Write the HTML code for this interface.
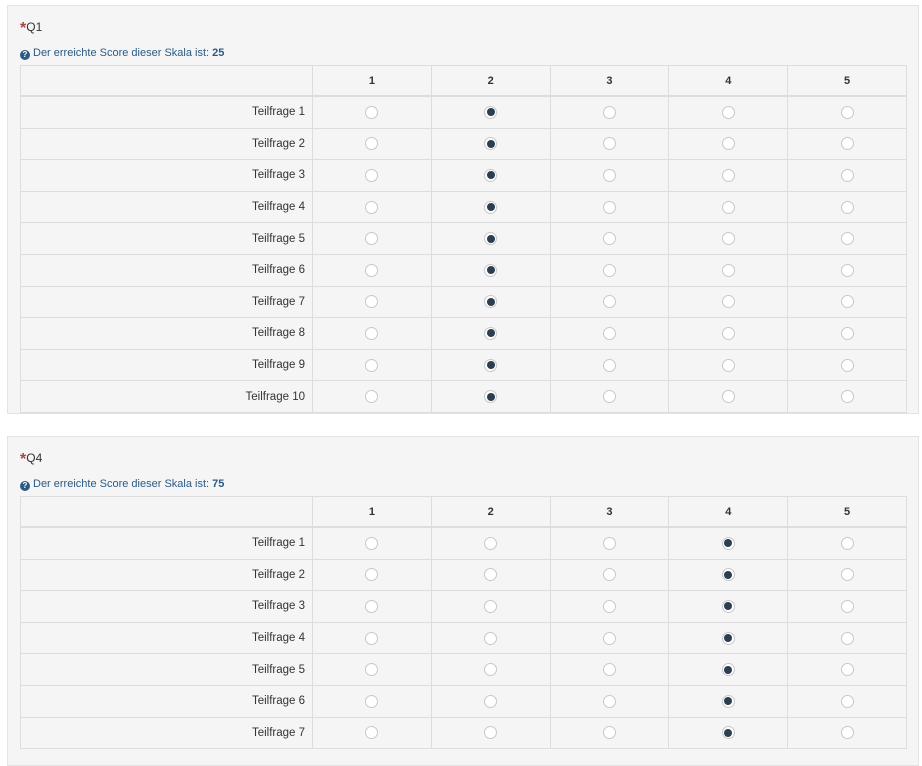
<!DOCTYPE html>
<html><head><meta charset="utf-8"><style>
body{margin:0;background:#fff;font-family:"Liberation Sans",sans-serif;color:#333;width:922px;height:750px;overflow:hidden;position:relative}
.panel{position:absolute;left:7px;width:912px;background:#f5f5f5;border:1px solid #e3e3e3;box-sizing:border-box}
.q{position:absolute;left:12px;font-size:12px}
.q b{color:#a94442;font-size:16px;position:relative;top:2px}
.s{position:absolute;left:12px;font-size:11px;color:#2a5a85}
.s i{display:inline-block;width:10px;height:10px;border-radius:50%;background:#2a5a85;color:#fff;font-size:8px;line-height:10px;text-align:center;font-style:normal;font-weight:bold;vertical-align:-1px;margin-right:3px}
table{position:absolute;left:12px;border-collapse:collapse;width:887px;table-layout:fixed;font-size:11.5px}
td,th{border:1px solid #ddd;padding:0;text-align:center}
th{height:29px;border-bottom:2px solid #ddd;font-weight:bold;color:#333;font-size:11px}
td{height:30.6px}
td.l{text-align:right;padding-right:7px}
.r{display:inline-block;width:13px;height:13px;border:1px solid #c8c8c8;border-radius:50%;background:#fff;box-sizing:border-box;vertical-align:middle;position:relative}
.r.on::after{content:"";position:absolute;left:1.5px;top:1.5px;width:8px;height:8px;border-radius:50%;background:#2c3e50}
</style></head><body>
<div class="panel" style="top:5px;height:409px">
<div class="q" style="top:12px"><b>*</b>Q1</div>
<div class="s" style="top:41px"><i>?</i>Der erreichte Score dieser Skala ist: <b>25</b></div>
<table style="top:59px"><colgroup><col style="width:292px"><col><col><col><col><col></colgroup>
<tr><th></th><th>1</th><th>2</th><th>3</th><th>4</th><th>5</th></tr>
<tr><td class="l">Teilfrage 1</td><td><span class="r"></span></td><td><span class="r on"></span></td><td><span class="r"></span></td><td><span class="r"></span></td><td><span class="r"></span></td></tr>
<tr><td class="l">Teilfrage 2</td><td><span class="r"></span></td><td><span class="r on"></span></td><td><span class="r"></span></td><td><span class="r"></span></td><td><span class="r"></span></td></tr>
<tr><td class="l">Teilfrage 3</td><td><span class="r"></span></td><td><span class="r on"></span></td><td><span class="r"></span></td><td><span class="r"></span></td><td><span class="r"></span></td></tr>
<tr><td class="l">Teilfrage 4</td><td><span class="r"></span></td><td><span class="r on"></span></td><td><span class="r"></span></td><td><span class="r"></span></td><td><span class="r"></span></td></tr>
<tr><td class="l">Teilfrage 5</td><td><span class="r"></span></td><td><span class="r on"></span></td><td><span class="r"></span></td><td><span class="r"></span></td><td><span class="r"></span></td></tr>
<tr><td class="l">Teilfrage 6</td><td><span class="r"></span></td><td><span class="r on"></span></td><td><span class="r"></span></td><td><span class="r"></span></td><td><span class="r"></span></td></tr>
<tr><td class="l">Teilfrage 7</td><td><span class="r"></span></td><td><span class="r on"></span></td><td><span class="r"></span></td><td><span class="r"></span></td><td><span class="r"></span></td></tr>
<tr><td class="l">Teilfrage 8</td><td><span class="r"></span></td><td><span class="r on"></span></td><td><span class="r"></span></td><td><span class="r"></span></td><td><span class="r"></span></td></tr>
<tr><td class="l">Teilfrage 9</td><td><span class="r"></span></td><td><span class="r on"></span></td><td><span class="r"></span></td><td><span class="r"></span></td><td><span class="r"></span></td></tr>
<tr><td class="l">Teilfrage 10</td><td><span class="r"></span></td><td><span class="r on"></span></td><td><span class="r"></span></td><td><span class="r"></span></td><td><span class="r"></span></td></tr>
</table>
</div>
<div class="panel" style="top:436px;height:330px">
<div class="q" style="top:12px"><b>*</b>Q4</div>
<div class="s" style="top:41px"><i>?</i>Der erreichte Score dieser Skala ist: <b>75</b></div>
<table style="top:59px"><colgroup><col style="width:292px"><col><col><col><col><col></colgroup>
<tr><th></th><th>1</th><th>2</th><th>3</th><th>4</th><th>5</th></tr>
<tr><td class="l">Teilfrage 1</td><td><span class="r"></span></td><td><span class="r"></span></td><td><span class="r"></span></td><td><span class="r on"></span></td><td><span class="r"></span></td></tr>
<tr><td class="l">Teilfrage 2</td><td><span class="r"></span></td><td><span class="r"></span></td><td><span class="r"></span></td><td><span class="r on"></span></td><td><span class="r"></span></td></tr>
<tr><td class="l">Teilfrage 3</td><td><span class="r"></span></td><td><span class="r"></span></td><td><span class="r"></span></td><td><span class="r on"></span></td><td><span class="r"></span></td></tr>
<tr><td class="l">Teilfrage 4</td><td><span class="r"></span></td><td><span class="r"></span></td><td><span class="r"></span></td><td><span class="r on"></span></td><td><span class="r"></span></td></tr>
<tr><td class="l">Teilfrage 5</td><td><span class="r"></span></td><td><span class="r"></span></td><td><span class="r"></span></td><td><span class="r on"></span></td><td><span class="r"></span></td></tr>
<tr><td class="l">Teilfrage 6</td><td><span class="r"></span></td><td><span class="r"></span></td><td><span class="r"></span></td><td><span class="r on"></span></td><td><span class="r"></span></td></tr>
<tr><td class="l">Teilfrage 7</td><td><span class="r"></span></td><td><span class="r"></span></td><td><span class="r"></span></td><td><span class="r on"></span></td><td><span class="r"></span></td></tr>
</table>
</div>
</body></html>
